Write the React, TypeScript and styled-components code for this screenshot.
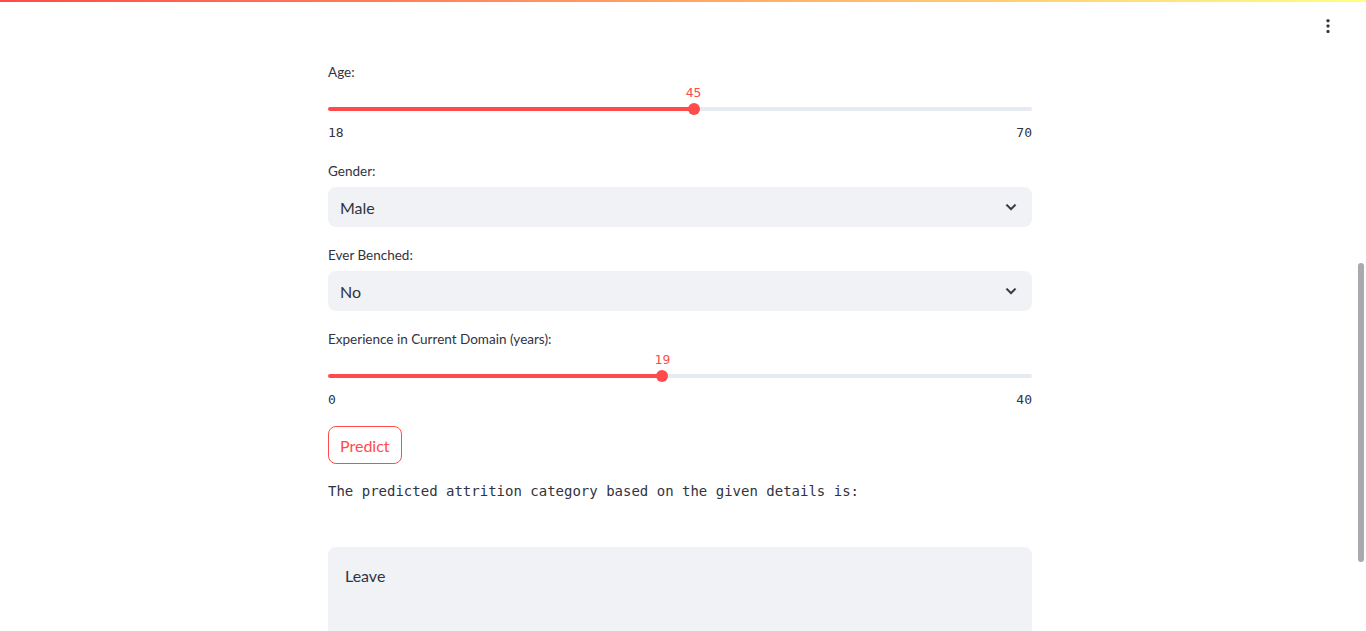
import React from "react";
import styled, { createGlobalStyle } from "styled-components";

const GlobalStyle = createGlobalStyle`
  html, body { margin: 0; padding: 0; height: 100%; overflow: hidden; background: #ffffff; }
  body { font-family: Lato, "Source Sans Pro", "Noto Sans", sans-serif; color: #31333f; }
  * { box-sizing: border-box; }
`;

const Page = styled.div`
  position: relative;
  width: 100%;
  height: 631px;
  overflow: hidden;
  padding-right: 6px;
`;

const TopBar = styled.div`
  position: absolute;
  top: 0;
  left: 0;
  right: 0;
  height: 2px;
  background: linear-gradient(90deg, #ff4b4b, #ffff80);
`;

const Header = styled.div`
  position: absolute;
  top: 2px;
  right: 0;
  left: 0;
  height: 58px;
  display: flex;
  justify-content: flex-end;
  align-items: center;
  padding-right: 28px;
`;

const MenuButton = styled.button`
  border: none;
  background: transparent;
  padding: 0;
  width: 20px;
  height: 20px;
  display: flex;
  align-items: center;
  justify-content: center;
  margin-top: -10px;
  color: #31333f;
`;

const Main = styled.main`
  width: 704px;
  margin: 0 auto;
  padding-top: 60px;
  display: flex;
  flex-direction: column;
  gap: 16px;
`;

const Widget = styled.div`
  display: flex;
  flex-direction: column;
`;

const Label = styled.label`
  font-size: 13.5px;
  line-height: 24px;
  height: 24px;
  color: #31333f;
`;

const ValueRow = styled.div`
  position: relative;
  height: 17px;
`;

const ValueText = styled.span`
  position: absolute;
  top: 0;
  transform: translateX(-50%);
  font-family: "DejaVu Sans Mono", "Liberation Mono", monospace;
  font-size: 13px;
  line-height: 17px;
  color: #ff4b4b;
`;

const TrackArea = styled.div`
  position: relative;
  height: 16px;
  display: flex;
  align-items: center;
`;

const Track = styled.div`
  width: 100%;
  height: 4px;
  border-radius: 2px;
`;

const Thumb = styled.div`
  position: absolute;
  top: 2px;
  width: 12px;
  height: 12px;
  border-radius: 50%;
  background: #ff4b4b;
  transform: translateX(-50%);
`;

const MinMax = styled.div`
  margin-top: 4px;
  height: 22px;
  display: flex;
  justify-content: space-between;
  font-family: "DejaVu Sans Mono", "Liberation Mono", monospace;
  font-size: 13px;
  line-height: 24px;
  color: #31333f;
`;

const Select = styled.div`
  margin-top: 4px;
  height: 40px;
  border-radius: 8px;
  background: #f0f2f6;
  display: flex;
  align-items: center;
  justify-content: space-between;
  padding: 0 11px 0 12px;
  font-size: 16px;
  color: #31333f;
`;

const Button = styled.button`
  align-self: flex-start;
  height: 38px;
  padding: 0 11px;
  border: 1px solid #ff4b4b;
  border-radius: 8px;
  background: #ffffff;
  color: #ff4b4b;
  font-family: Lato, "Noto Sans", sans-serif;
  font-size: 16px;
`;

const MonoText = styled.p`
  margin: 0;
  font-family: "DejaVu Sans Mono", "Liberation Mono", monospace;
  font-size: 14px;
  line-height: 22px;
  color: #31333f;
`;

const ResultBox = styled.div`
  margin-top: 29px;
  height: 160px;
  border-radius: 8px;
  background: #f0f2f6;
  padding: 16px 17px;
  font-size: 16px;
  line-height: 26px;
  color: #31333f;
`;

const ScrollThumb = styled.div`
  position: absolute;
  right: 2px;
  top: 263px;
  width: 6px;
  height: 299px;
  border-radius: 3px;
  background: #a9a9b0;
`;

type SliderProps = { label: string; min: number; max: number; value: number };

const Slider: React.FC<SliderProps> = ({ label, min, max, value }) => {
  const pct = ((value - min) / (max - min)) * 100;
  return (
    <Widget>
      <Label>{label}</Label>
      <ValueRow>
        <ValueText style={{ left: `${pct}%` }}>{value}</ValueText>
      </ValueRow>
      <TrackArea>
        <Track
          style={{
            background: `linear-gradient(90deg, #ff4b4b 0%, #ff4b4b ${pct}%, #e6eaf1 ${pct}%, #e6eaf1 100%)`,
          }}
        />
        <Thumb style={{ left: `${pct}%` }} />
      </TrackArea>
      <MinMax>
        <span>{min}</span>
        <span>{max}</span>
      </MinMax>
    </Widget>
  );
};

const Chevron = () => (
  <svg width="20" height="20" viewBox="0 0 24 24" fill="#31333f">
    <path d="M16.59 8.59L12 13.17 7.41 8.59 6 10l6 6 6-6z" stroke="#31333f" strokeWidth="0.6" />
  </svg>
);

type SelectProps = { label: string; value: string };

const SelectBox: React.FC<SelectProps> = ({ label, value }) => (
  <Widget>
    <Label>{label}</Label>
    <Select>
      <span>{value}</span>
      <Chevron />
    </Select>
  </Widget>
);

export default function App() {
  return (
    <>
      <GlobalStyle />
      <Page>
        <TopBar />
        <Header>
          <MenuButton aria-label="menu">
            <svg width="20" height="20" viewBox="0 0 20 20" fill="#31333f">
              <rect x="8.5" y="3.3" width="3" height="3" rx="1" />
              <rect x="8.5" y="8.6" width="3" height="3" rx="1" />
              <rect x="8.5" y="13.9" width="3" height="3" rx="1" />
            </svg>
          </MenuButton>
        </Header>
        <Main>
          <Slider label="Age:" min={18} max={70} value={45} />
          <SelectBox label="Gender:" value="Male" />
          <SelectBox label="Ever Benched:" value="No" />
          <Slider label="Experience in Current Domain (years):" min={0} max={40} value={19} />
          <Button>Predict</Button>
          <MonoText>The predicted attrition category based on the given details is:</MonoText>
          <ResultBox>Leave</ResultBox>
        </Main>
        <ScrollThumb />
      </Page>
    </>
  );
}
